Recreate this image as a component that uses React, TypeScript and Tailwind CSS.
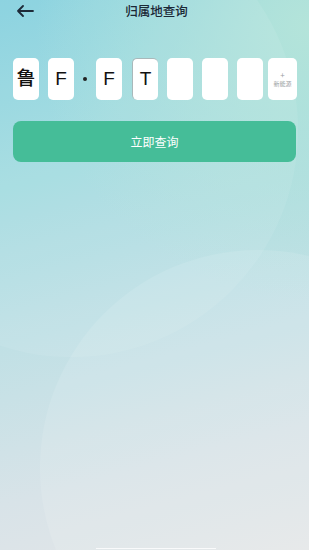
import React from 'react';

const font = '"Noto Sans CJK SC", "Noto Sans", sans-serif';

function PlateBox({ children, active = false }: { children?: React.ReactNode; active?: boolean }) {
  return (
    <div
      className={
        'w-[26px] h-[42px] rounded-[5px] bg-white flex items-center justify-center text-[19px] text-[#111] font-["Liberation_Sans","Noto_Sans_CJK_SC",sans-serif] ' +
        (active ? 'border-t border-l border-[#a9b8ba]' : '')
      }
    >
      {children}
    </div>
  );
}

export default function App() {
  return (
    <div
      className="relative w-[309px] h-[550px] overflow-hidden bg-[radial-gradient(circle_at_100%_5%,#b4e4da_0%,rgba(180,228,218,0)_45%),linear-gradient(165deg,#84d0de_0%,#a3dbe0_30%,#c0e0e5_55%,#d8e3e8_80%,#e4e6e8_100%)]"
      style={{ fontFamily: font }}
    >
      {/* background circles */}
      <div className="absolute left-[-156px] top-[-97px] w-[454px] h-[454px] rounded-full bg-white/[0.07]" />
      <div className="absolute left-[40px] top-[250px] w-[436px] h-[436px] rounded-full bg-white/10" />
      <div className="absolute left-[96px] bottom-[1px] w-[120px] h-[1px] bg-white/80" />

      <div className="relative">
        {/* Header */}
        <div className="flex items-center h-[22px] px-[16px]">
          <svg width="18" height="12" viewBox="0 0 18 12" fill="none" stroke="#1d2a38" strokeWidth="1.8" strokeLinecap="round" strokeLinejoin="round">
            <path d="M17 6H2M7 1L2 6l5 5" />
          </svg>
          <div className="flex-1 text-center text-[12.5px] font-medium text-[#1b2836] pr-[18px] pl-[4px]">归属地查询</div>
        </div>

        {/* Plate */}
        <div className="flex items-center pl-[13px] mt-[36px]">
          <PlateBox><span className="font-medium">鲁</span></PlateBox>
          <div className="ml-[9px]"><PlateBox>F</PlateBox></div>
          <div className="w-[22px] flex justify-center">
            <div className="w-[4px] h-[4px] rounded-full bg-[#222]" />
          </div>
          <PlateBox>F</PlateBox>
          <div className="ml-[10px]"><PlateBox active>T</PlateBox></div>
          <div className="ml-[9px]"><PlateBox /></div>
          <div className="ml-[9px]"><PlateBox /></div>
          <div className="ml-[9px]"><PlateBox /></div>
          <div className="ml-[5px] w-[29px] h-[42px] rounded-[5px] bg-white flex flex-col items-center justify-center text-[#9aa0a3]">
            <span className="text-[8px] leading-[8px]">+</span>
            <span className="text-[6px] leading-[9px]">新能源</span>
          </div>
        </div>

        {/* Button */}
        <div className="mx-[13px] mt-[21px] h-[41px] rounded-[8px] bg-[#45bd98] flex items-center justify-center text-white text-[12px]">
          立即查询
        </div>
      </div>
    </div>
  );
}
